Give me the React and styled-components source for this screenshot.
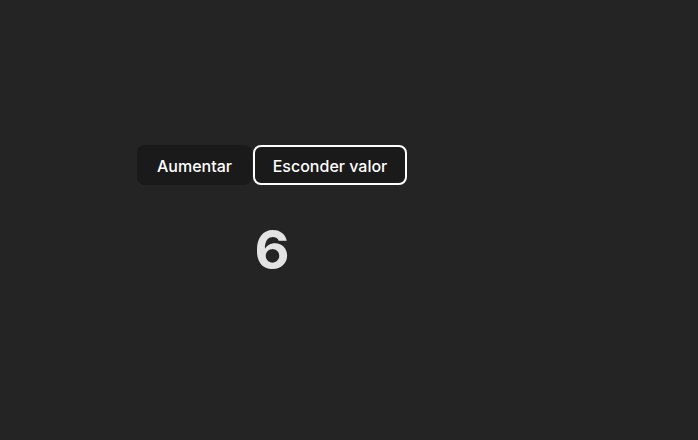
import React from "react";
import styled, { createGlobalStyle } from "styled-components";

const Global = createGlobalStyle`
  html, body { margin: 0; padding: 0; }
  body {
    background: #242424;
    color: rgba(255,255,255,0.87);
    font-family: Inter, "Noto Sans", sans-serif;
    width: 698px;
    height: 440px;
    overflow: hidden;
  }
`;

const Page = styled.div`
  padding: 145px 0 0 137px;
`;

const Column = styled.div`
  display: inline-flex;
  flex-direction: column;
  align-items: center;
`;

const Toolbar = styled.div`
  display: flex;
  gap: 1px;
`;

const Button = styled.button`
  width: ${(p) => p.$w}px;
  height: 40px;
  box-sizing: border-box;
  padding: 2px 0 0;
  display: flex;
  align-items: center;
  justify-content: center;
  border-radius: 8px;
  border: ${(p) => (p.$active ? "2px solid #ffffff" : "1px solid transparent")};
  background: #1a1a1a;
  color: #ffffff;
  font-family: Inter, "Noto Sans", sans-serif;
  font-size: 16px;
  font-weight: 500;
  cursor: pointer;
`;

const Value = styled.h1`
  margin: 33px 0 0;
  font-family: Inter, "Noto Sans", sans-serif;
  font-size: 54px;
  line-height: 64px;
  font-weight: 700;
  color: #e3e3e3;
`;

export default function App() {
  return (
    <>
      <Global />
      <Page>
        <Column>
          <Toolbar>
            <Button $w={115}>Aumentar</Button>
            <Button $w={154} $active>Esconder valor</Button>
          </Toolbar>
          <Value>6</Value>
        </Column>
      </Page>
    </>
  );
}
